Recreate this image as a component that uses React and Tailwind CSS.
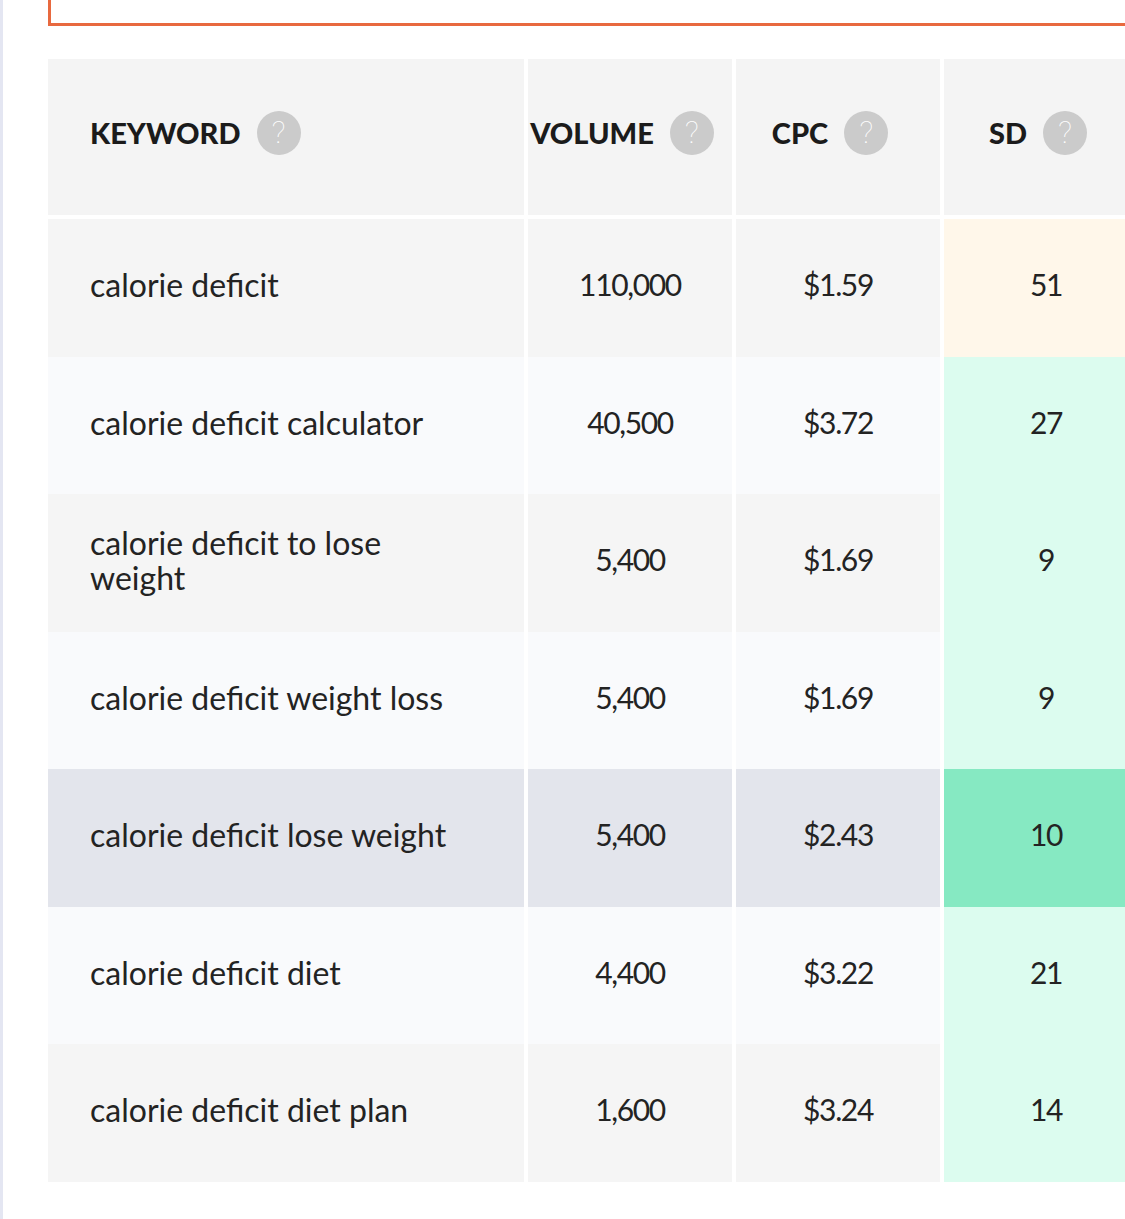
import React from "react";

const rows = [
  { k: "calorie deficit", v: "110,000", c: "$1.59", sd: "51", bg: "bg-[#f5f5f5]", sdbg: "bg-[#fff7ea]" },
  { k: "calorie deficit calculator", v: "40,500", c: "$3.72", sd: "27", bg: "bg-[#f9fafc]", sdbg: "bg-[#dcfcef]" },
  { k: "calorie deficit to lose weight", v: "5,400", c: "$1.69", sd: "9", bg: "bg-[#f5f5f5]", sdbg: "bg-[#dcfcef]" },
  { k: "calorie deficit weight loss", v: "5,400", c: "$1.69", sd: "9", bg: "bg-[#f9fafc]", sdbg: "bg-[#dcfcef]" },
  { k: "calorie deficit lose weight", v: "5,400", c: "$2.43", sd: "10", bg: "bg-[#e3e5ec]", sdbg: "bg-[#86e9c2]" },
  { k: "calorie deficit diet", v: "4,400", c: "$3.22", sd: "21", bg: "bg-[#f9fafc]", sdbg: "bg-[#dcfcef]" },
  { k: "calorie deficit diet plan", v: "1,600", c: "$3.24", sd: "14", bg: "bg-[#f5f5f5]", sdbg: "bg-[#dcfcef]" },
];

function Q() {
  return (
    <span className="flex h-[44px] w-[44px] shrink-0 items-center justify-center rounded-full bg-[#cbcbcb] pb-[2px] text-[32px] font-thin leading-none text-white [font-family:'Roboto',sans-serif]">
      ?
    </span>
  );
}

function Head({ children, center }) {
  return (
    <div className={`flex h-[156px] items-center gap-4 bg-[#f4f4f4] pb-[9px] ${center ? "justify-center pr-4" : "pl-[42px]"}`}>
      <span className="text-[29px] font-black text-[#1b1b1b]">{children}</span>
      <Q />
    </div>
  );
}

export default function App() {
  return (
    <div className="h-[1219px] w-[1125px] overflow-hidden bg-white [font-family:'Lato',sans-serif]">
      <div className="h-full border-l-[3px] border-[#e4e6f2] pl-[45px]">
        <div className="h-[26px] w-[1200px] border-b-[3px] border-l-[3px] border-[#e8693f]" />
        <div className="mt-[33px] grid w-[1100px] grid-cols-[476px_204px_204px_204px] gap-x-[4px] text-[#232323]">
          <Head>KEYWORD</Head>
          <Head center>VOLUME</Head>
          <Head center>CPC</Head>
          <Head center>SD</Head>
          <div className="col-span-4 h-[4px]" />
          {rows.map((r, i) => (
            <React.Fragment key={i}>
              <div className={`flex h-[137.5px] items-center pb-[6px] pl-[42px] ${r.bg}`}>
                <span className="max-w-[372px] text-[32px] leading-[35px]">{r.k}</span>
              </div>
              <div className={`flex h-[137.5px] items-center justify-center pb-[6px] text-[30px] tracking-[-0.045em] ${r.bg}`}>{r.v}</div>
              <div className={`flex h-[137.5px] items-center justify-center pb-[6px] text-[30px] tracking-[-0.045em] ${r.bg}`}>{r.c}</div>
              <div className={`flex h-[137.5px] items-center justify-center pb-[6px] text-[30px] tracking-[-0.045em] ${r.sdbg}`}>{r.sd}</div>
            </React.Fragment>
          ))}
        </div>
      </div>
    </div>
  );
}
